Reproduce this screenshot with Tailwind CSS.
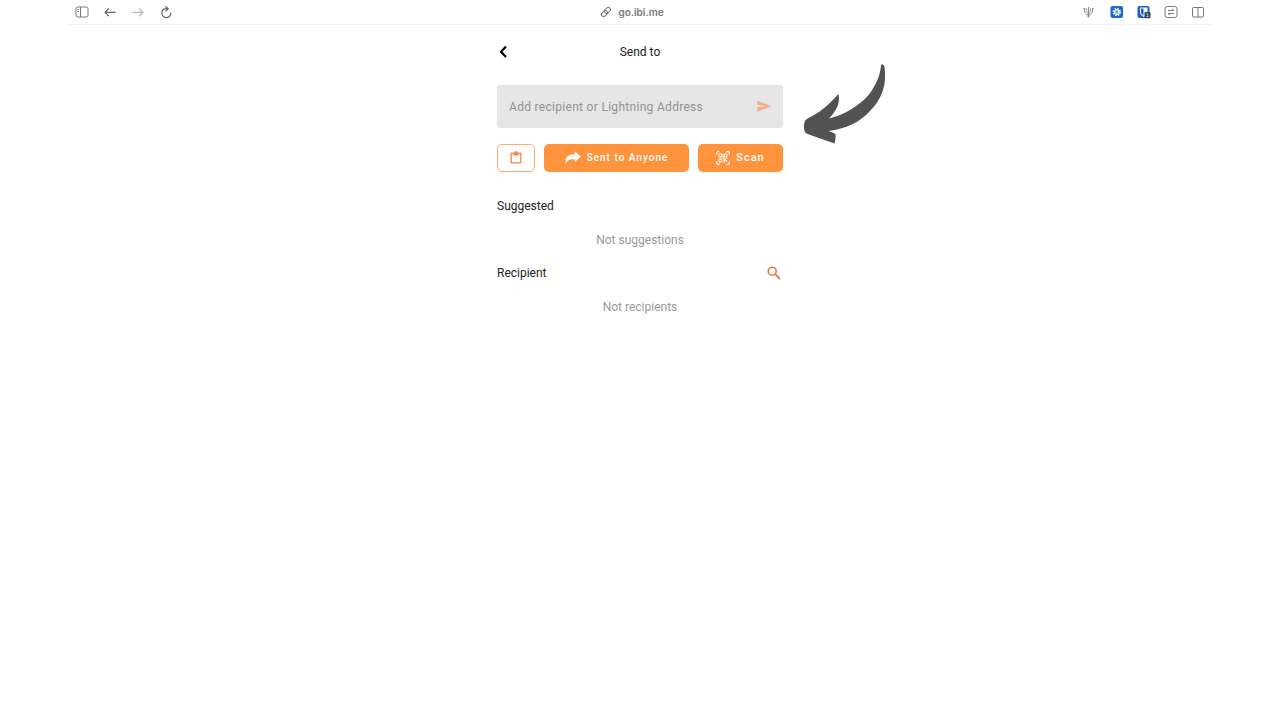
<!DOCTYPE html>
<html lang="en">
<head>
  <meta charset="UTF-8" />
  <meta name="viewport" content="width=device-width, initial-scale=1.0" />
  <title>Send to</title>
  <script src="https://cdn.jsdelivr.net/npm/@tailwindcss/browser@4"></script>
</head>
<body class="bg-white text-[#222] font-[Roboto,sans-serif] min-h-screen">
  <!-- Browser toolbar -->
  <header class="mx-17 px-[7px] h-[25px] border-b border-[#f2f2f2] grid grid-cols-[1fr_auto_1fr] items-center text-[#777]">
    <nav class="flex items-center gap-3.5">
      <button aria-label="Sidebar">
        <svg class="size-3.5 block" viewBox="0 0 14 14" fill="none" stroke="currentColor" stroke-width="1"><rect x="1" y="2" width="12" height="10" rx="1.8" /><path d="M5.5 2v10M2.5 4.5h1.5M2.5 6.5h1.5" /></svg>
      </button>
      <button aria-label="Back" class="text-[#666]">
        <svg class="size-3.5 block" viewBox="0 0 14 14" fill="none" stroke="currentColor" stroke-width="1.2" stroke-linecap="round" stroke-linejoin="round"><path d="M12.2 7.3H2M5.6 3.7L2 7.3l3.6 3.6" /></svg>
      </button>
      <button aria-label="Forward" class="text-[#b5b5b5]">
        <svg class="size-3.5 block" viewBox="0 0 14 14" fill="none" stroke="currentColor" stroke-width="1.2" stroke-linecap="round" stroke-linejoin="round"><path d="M1.8 7.3H12M8.4 3.7L12 7.3l-3.6 3.6" /></svg>
      </button>
      <button aria-label="Reload" class="text-[#666]">
        <svg class="size-3.5 block" viewBox="0 0 14 14" fill="none" stroke="currentColor" stroke-width="1.2" stroke-linecap="round" stroke-linejoin="round"><path d="M8.3 3.7A4.5 4.5 0 1 0 11.8 8.2M6.8 1.6l2.4 2.2-2.3 2.2" /></svg>
      </button>
    </nav>
    <a href="#" class="flex items-center gap-1.5 pr-4 text-[10px] font-semibold font-[Inter,sans-serif]">
      <svg class="size-3" viewBox="0 0 12 12" fill="none" stroke="currentColor" stroke-width="1"><rect x="4.2" y="2.2" width="6.6" height="4.4" rx="2.2" transform="rotate(-45 7.5 4.4)" /><rect x="1.2" y="5.4" width="6.6" height="4.4" rx="2.2" transform="rotate(-45 4.5 7.6)" /></svg>
      go.ibi.me
    </a>
    <div class="flex items-center justify-end gap-[13px]">
      <button aria-label="Trident">
        <svg class="w-4 h-3.5 block text-[#8a8a8a]" viewBox="0 0 16 14" fill="none" stroke="currentColor" stroke-width="1"><path d="M7.500 2v10.500M3.500 3v2.500c0 2.500 1.500 4 4 4s4-1.500 4-4V3M5.500 3.500v2c0 1.200.8 2 2 2s2-.8 2-2v-2M2.500 4l1-1M12.500 4l-1-1M6 11h3" /></svg>
      </button>
      <button aria-label="Settings extension">
        <svg class="size-3.5 block" viewBox="0 0 14 14"><rect x=".5" y="1" width="12.5" height="12" rx="2" fill="#1b66d8" /><circle cx="6.8" cy="7" r="3.500" fill="none" stroke="#fff" stroke-width="1.400" stroke-dasharray="1.500 1.250" /><circle cx="6.800" cy="7" r="2.300" fill="#5c9df0" stroke="#fff" stroke-width="1.300" /></svg>
      </button>
      <button aria-label="Password manager">
        <svg class="size-3.5 block" viewBox="0 0 14 14"><rect x=".5" y="1" width="12" height="12" rx="2" fill="#1b5fd0" /><path d="M3 2.500h7.500V7c0 2.500-1.500 3.900-3.700 5C4.500 10.900 3 9.500 3 7z" fill="#fff" /><path d="M4 3.500h2.500v7.200C4.900 9.800 4 8.700 4 7z" fill="#1b5fd0" /><rect x="7.500" y="7" width="6" height="6.300" rx="1" fill="#34424f" /><path d="M9.600 8.500h1v3M9.400 11.500h2.400" fill="none" stroke="#c9d2da" stroke-width=".8" /></svg>
      </button>
      <button aria-label="Site controls">
        <svg class="size-3.5 block" viewBox="0 0 14 14" fill="none" stroke="currentColor" stroke-width="1"><rect x="1" y="1.5" width="12" height="11" rx="2.5" /><path d="M4 5.5h6M8.300 4L10 5.500M10 8.500H4M5.700 10L4 8.500" /></svg>
      </button>
      <button aria-label="Split view">
        <svg class="size-3.5 block" viewBox="0 0 14 14" fill="none" stroke="currentColor" stroke-width="1"><rect x="1.500" y="2.500" width="11" height="9.500" rx="1" /><path d="M7 2.500v9.500" /></svg>
      </button>
    </div>
  </header>

  <main class="mx-auto w-full max-w-[286px] pt-[17px] text-xs leading-5">
    <div class="grid grid-cols-[1fr_auto_1fr] items-center">
      <button aria-label="Go back" class="justify-self-start">
        <svg class="w-3 h-4 block" viewBox="0 0 12 16" fill="none" stroke="#000" stroke-width="2.200"><path d="M9 2.500L4 7.800l5 5.300" /></svg>
      </button>
      <h1>Send to</h1>
    </div>

    <form class="relative mt-[23px] flex items-center h-[43px] rounded-[3px] bg-[#e6e6e6] pl-3 pr-[11px]" onsubmit="event.preventDefault()">
      <input type="text" aria-label="Recipient" placeholder="Add recipient or Lightning Address" class="flex-1 min-w-0 outline-none tracking-wide placeholder:text-[#929292]" />
      <button type="submit" aria-label="Send">
        <svg class="w-[15px] h-3.5 block" viewBox="0 0 15 14" fill="#f9a98c"><path d="M.3 .8L14.600 6.300 .3 11.800V7.600L8.500 6.300 .3 5z" /></svg>
      </button>
      <svg class="absolute left-full -top-[22px] ml-5 w-[84px] h-[82px]" viewBox="0 0 84 82" fill="#525252"><path d="M78 2c1-1.500 2.800-.8 3.500 2C84 22 79 36 67 48 56 60 43 65.500 25.500 68c2.300.8 4.500 1.700 7 3 .2 3 0 6-1 9.500L4.500 71C2 70 1 68 1 64.500 1 60 1.500 57 5 55.200 17 49.500 26 42 35.200 31c1.300 3 1 9-1 13-2 4-4.500 7.500-8 11.500C42 51.500 56 43 66 31.500 73 22 77.500 12 78 2z" /></svg>
    </form>

    <div class="mt-4 flex gap-[9px] h-7 text-[10px] font-medium text-white tracking-widest">
      <button aria-label="Paste" class="w-[38px] grid place-items-center rounded-[5px] border border-[#fba96c]">
        <svg class="size-3.5" viewBox="0 0 14 14" fill="#f58448"><path d="M3 1.500h2.500a1.500 1.500 0 0 1 3 0H11.500a1 1 0 0 1 1 1v9a1 1 0 0 1-1 1h-9a1 1 0 0 1-1-1v-9a1 1 0 0 1 1-1zm-.2 1.300v8.400h8.400V2.800H9.700V4.500H4.300V2.800z" /></svg>
      </button>
      <button class="flex-1 flex items-center justify-center gap-1.5 rounded-[5px] bg-[#ff943d]">
        <svg class="w-4 h-3.5" viewBox="0 0 16 14" fill="#fff"><path d="M.7 13.200C-.5 6.500 3.300 3.300 9.800 3.300V.3l6 5.400-6 5.400V8.400C5.200 8 2.500 9 .7 13.200z" /></svg>
        Sent to Anyone
      </button>
      <button class="w-[85px] flex items-center justify-center gap-1.5 rounded-[5px] bg-[#ff943d]">
        <svg class="size-3.5" viewBox="0 0 14 14" fill="none" stroke="#fff"><path d="M.7 3.500V2A1.300 1.300 0 0 1 2 .7h1.500M10.500.7H12A1.300 1.300 0 0 1 13.300 2v1.500M13.300 10.500V12a1.300 1.300 0 0 1-1.300 1.300h-1.500M3.500 13.300H2A1.300 1.300 0 0 1 .7 12v-1.500" stroke-width="1.200" /><path d="M3 3h2.800v2.800H3zM8.200 3H11v2.800H8.200zM3 8.200h2.800V11H3zM7 3v4h1.500M3 7h2.500M8 8h1.500v1.500H8zM10 7h1.500M10.500 9v2M7.500 11H9" stroke-width="1" /></svg>
        <span class="text-[11px]">Scan</span>
      </button>
    </div>

    <section class="mt-6">
      <h2>Suggested</h2>
      <p class="mt-3.5 text-center text-[#999]">Not suggestions</p>
    </section>

    <section class="mt-[13px]">
      <div class="flex items-center justify-between">
        <h2>Recipient</h2>
        <button aria-label="Search recipients" class="mr-0.5">
          <svg class="size-3.5 block" viewBox="0 0 14 14" fill="none" stroke="#f4743b" stroke-width="1.600"><circle cx="5.200" cy="5.200" r="4" /><path d="M8.200 8.200l4.800 4.800" stroke-width="1.900" /></svg>
        </button>
      </div>
      <p class="mt-3.5 text-center text-[#999]">Not recipients</p>
    </section>
  </main>
</body>
</html>
